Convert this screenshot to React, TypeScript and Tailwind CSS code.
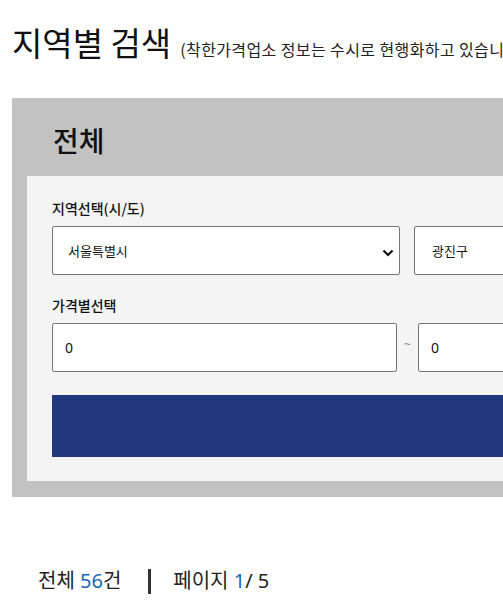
import React from "react";

const KR = { fontFamily: '"Noto Sans CJK KR", "Noto Sans", sans-serif' };
const NS = { fontFamily: '"Noto Sans", "Noto Sans CJK KR", sans-serif' };

function Chevron() {
  return (
    <svg width="12" height="8" viewBox="0 0 12 8" className="absolute right-[5px] top-[22px]">
      <path d="M1.5 1.5 L6 6 L10.5 1.5" fill="none" stroke="#111" strokeWidth="2.2" />
    </svg>
  );
}

export default function App() {
  return (
    <div className="w-[503px] h-[611px] overflow-hidden bg-white text-[#111]" style={KR}>
      <div className="w-[1100px] pl-[12px]">
        <div className="pt-[19px] h-[98px] flex items-baseline">
          <h1 className="text-[33px] leading-[46px] font-normal">지역별 검색</h1>
          <span className="ml-[9px] text-[16px] tracking-[0.4px] text-[#222]">
            (착한가격업소 정보는 수시로 현행화하고 있습니다. 일부 정보가 실제와 다를 수 있습니다.)
          </span>
        </div>

        <div className="bg-[#c2c2c2] pl-[15px] pb-[16px] w-[1000px]">
          <div className="h-[78px] pl-[26px] pt-[22px]">
            <h2 className="text-[28px] leading-[40px] font-medium">전체</h2>
          </div>
          <div className="bg-[#f4f4f4] pl-[25px] pt-[22px] pb-[24px]">
            <div className="text-[14px] leading-[20px] font-medium mb-[8px]">지역선택(시/도)</div>
            <div className="flex gap-[14px]">
              <div className="relative w-[348px] h-[49px] bg-white border border-[#767676] rounded-[2px] flex items-center pl-[15px] text-[13px]">
                서울특별시
                <Chevron />
              </div>
              <div className="relative w-[348px] h-[49px] bg-white border border-[#767676] rounded-[2px] flex items-center pl-[17px] text-[13px]">
                광진구
              </div>
            </div>
            <div className="text-[14px] leading-[20px] font-medium mt-[20px] mb-[8px]">가격별선택</div>
            <div className="flex items-center">
              <div className="w-[345px] h-[49px] bg-white border border-[#767676] rounded-[2px] flex items-center pl-[12px] text-[14px]" style={NS}>
                0
              </div>
              <div className="w-[21px] text-center text-[#888] text-[12px] -mt-[6px]" style={NS}>~</div>
              <div className="w-[345px] h-[49px] bg-white border border-[#767676] rounded-[2px] flex items-center pl-[12px] text-[14px]" style={NS}>
                0
              </div>
            </div>
            <div className="mt-[23px] h-[62px] w-[900px] bg-[#21387f]" />
          </div>
        </div>

        <div className="mt-[69px] pl-[26px] flex items-center text-[20px] text-[#222]" style={NS}>
          <span>
            전체 <span className="text-[#1a66b8]">56</span>건
          </span>
          <span className="ml-[27px] mr-[22px] w-[3px] h-[25px] bg-[#333] inline-block" />
          <span>
            페이지 <span className="text-[#1a66b8]">1</span>/ 5
          </span>
        </div>
      </div>
    </div>
  );
}
